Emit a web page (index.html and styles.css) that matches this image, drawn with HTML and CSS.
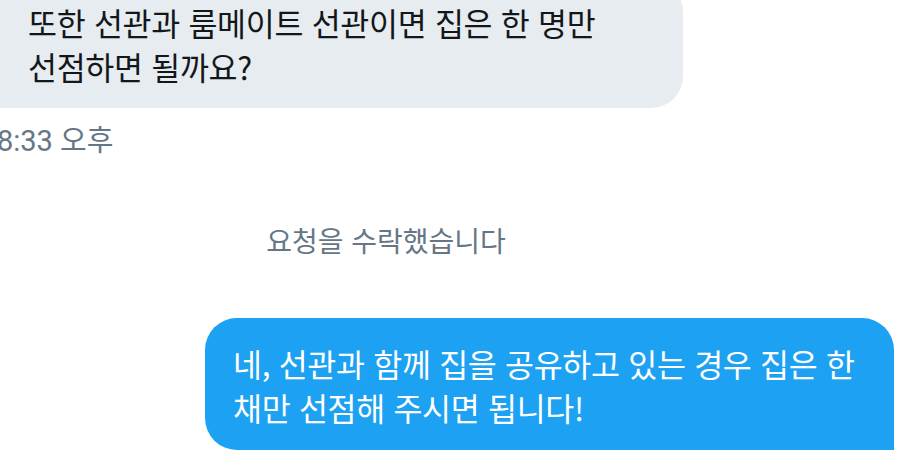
FILE: index.html
```html
<!DOCTYPE html>
<html lang="ko">
<head>
<meta charset="utf-8">
<title>대화</title>
<link rel="stylesheet" href="styles.css">
</head>
<body>
<main class="chat">
  <div class="group group-recv">
    <p class="bubble bubble-recv">또한 선관과 룸메이트 선관이면 집은 한 명만 선점하면 될까요?</p>
    <time class="stamp">8:33 오후</time>
  </div>
  <p class="system">요청을 수락했습니다</p>
  <div class="group group-sent">
    <p class="bubble bubble-sent">네, 선관과 함께 집을 공유하고 있는 경우 집은 한 채만 선점해 주시면 됩니다!</p>
  </div>
</main>
</body>
</html>
```
FILE: styles.css
```css
html, body {
  margin: 0;
  padding: 0;
  background: #ffffff;
  overflow: hidden;
}

body {
  width: 910px;
  height: 454px;
  font-family: "Noto Sans CJK KR", "Noto Sans", sans-serif;
}

.chat {
  width: 1016px;
  margin: -20px 0 0 -122px;
  padding-right: 16px;
  display: flex;
  flex-direction: column;
}

.group {
  display: flex;
  flex-direction: column;
}

.group-recv {
  align-items: flex-start;
  margin-left: 118px;
}

.group-sent {
  align-items: flex-end;
  margin-top: 62px;
}

.bubble {
  margin: 0;
  font-size: 31.5px;
  line-height: 44px;
  word-break: keep-all;
  letter-spacing: -0.3px;
}

.bubble-recv {
  width: 627px;
  padding: 20px 28px 20px 32px;
  background: #e6ecf0;
  color: #14171a;
  border-radius: 32px 32px 32px 0;
}

.bubble-sent {
  width: 633px;
  padding: 23px 28px 21px 28px;
  background: #1da1f2;
  color: #ffffff;
  border-radius: 32px 32px 0 32px;
}

.stamp {
  margin-top: 17px;
  margin-left: 1px;
  font-family: Roboto, "Noto Sans CJK KR", sans-serif;
  font-size: 29px;
  line-height: 32px;
  color: #657786;
}

.system {
  margin: 67px 0 0;
  text-align: center;
  font-size: 28px;
  line-height: 32px;
  color: #657786;
}
```
